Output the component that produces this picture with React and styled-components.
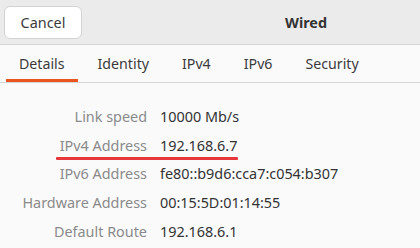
import React from "react";
import styled, { createGlobalStyle } from "styled-components";

const Global = createGlobalStyle`
  html, body { margin: 0; padding: 0; background: #fafafa; }
  body { font-family: "Noto Sans", "Open Sans", sans-serif; -webkit-font-smoothing: antialiased; }
`;

const Window = styled.div`
  width: 420px;
  height: 248px;
  background: #fafafa;
  overflow: hidden;
  display: flex;
  flex-direction: column;
`;

const HeaderBar = styled.div`
  background: #ebebeb;
  border-bottom: 1px solid #d6d6d6;
  display: flex;
  align-items: center;
  padding-left: 4px;
  box-sizing: border-box;
  height: 45px;
`;

const Button = styled.button`
  width: 78px;
  height: 33px;
  border: 1px solid #d3d3d3;
  border-radius: 6px;
  background: #ffffff;
  color: #3a3a3a;
  font-family: inherit;
  font-size: 14.4px;
  padding: 0;
`;

const Title = styled.div`
  flex: 1;
  text-align: center;
  padding-left: 110px;
  font-weight: 700;
  font-size: 14.4px;
  color: #333333;
`;

const TabBar = styled.div`
  background: #fafafa;
  border-bottom: 1px solid #d6d6d6;
  display: flex;
  padding-left: 6px;
  gap: 7px;
  box-sizing: border-box;
  height: 38px;
`;

const Tab = styled.div`
  position: relative;
  padding: 0 13px;
  display: flex;
  align-items: center;
  font-size: 14.2px;
  color: #3a3a3a;
  &::after {
    content: "";
    position: absolute;
    left: 0;
    right: 0;
    bottom: 0;
    height: 3px;
    background: ${(p) => (p.$active ? "#e95420" : "transparent")};
  }
`;

const Details = styled.div`
  display: grid;
  grid-template-columns: 147px auto;
  column-gap: 13px;
  padding-top: 19px;
  grid-auto-rows: 28.75px;
  align-items: center;
`;

const Label = styled.div`
  text-align: right;
  font-size: 14.4px;
  color: #8a8a8a;
`;

const Value = styled.div`
  font-size: 14.4px;
  color: #333333;
  justify-self: start;
`;

const Highlight = styled.div`
  position: relative;
  grid-column: 1 / 3;
  align-self: stretch;
  display: grid;
  grid-template-columns: 147px auto;
  column-gap: 13px;
  align-items: center;
  &::after {
    content: "";
    position: absolute;
    left: 56px;
    width: 182px;
    bottom: 0px;
    height: 2.5px;
    border-radius: 1px;
    background: #e8373a;
  }
`;

const rows = [
  ["Link speed", "10000 Mb/s"],
  ["IPv4 Address", "192.168.6.7", true],
  ["IPv6 Address", "fe80::b9d6:cca7:c054:b307"],
  ["Hardware Address", "00:15:5D:01:14:55"],
  ["Default Route", "192.168.6.1"],
];

export default function App() {
  return (
    <Window>
      <Global />
      <HeaderBar>
        <Button>Cancel</Button>
        <Title>Wired</Title>
      </HeaderBar>
      <TabBar>
        <Tab $active>Details</Tab>
        <Tab>Identity</Tab>
        <Tab>IPv4</Tab>
        <Tab>IPv6</Tab>
        <Tab>Security</Tab>
      </TabBar>
      <Details>
        {rows.map(([l, v, hl]) =>
          hl ? (
            <Highlight key={l}>
              <Label>{l}</Label>
              <Value>{v}</Value>
            </Highlight>
          ) : (
            <React.Fragment key={l}>
              <Label>{l}</Label>
              <Value>{v}</Value>
            </React.Fragment>
          )
        )}
      </Details>
    </Window>
  );
}
